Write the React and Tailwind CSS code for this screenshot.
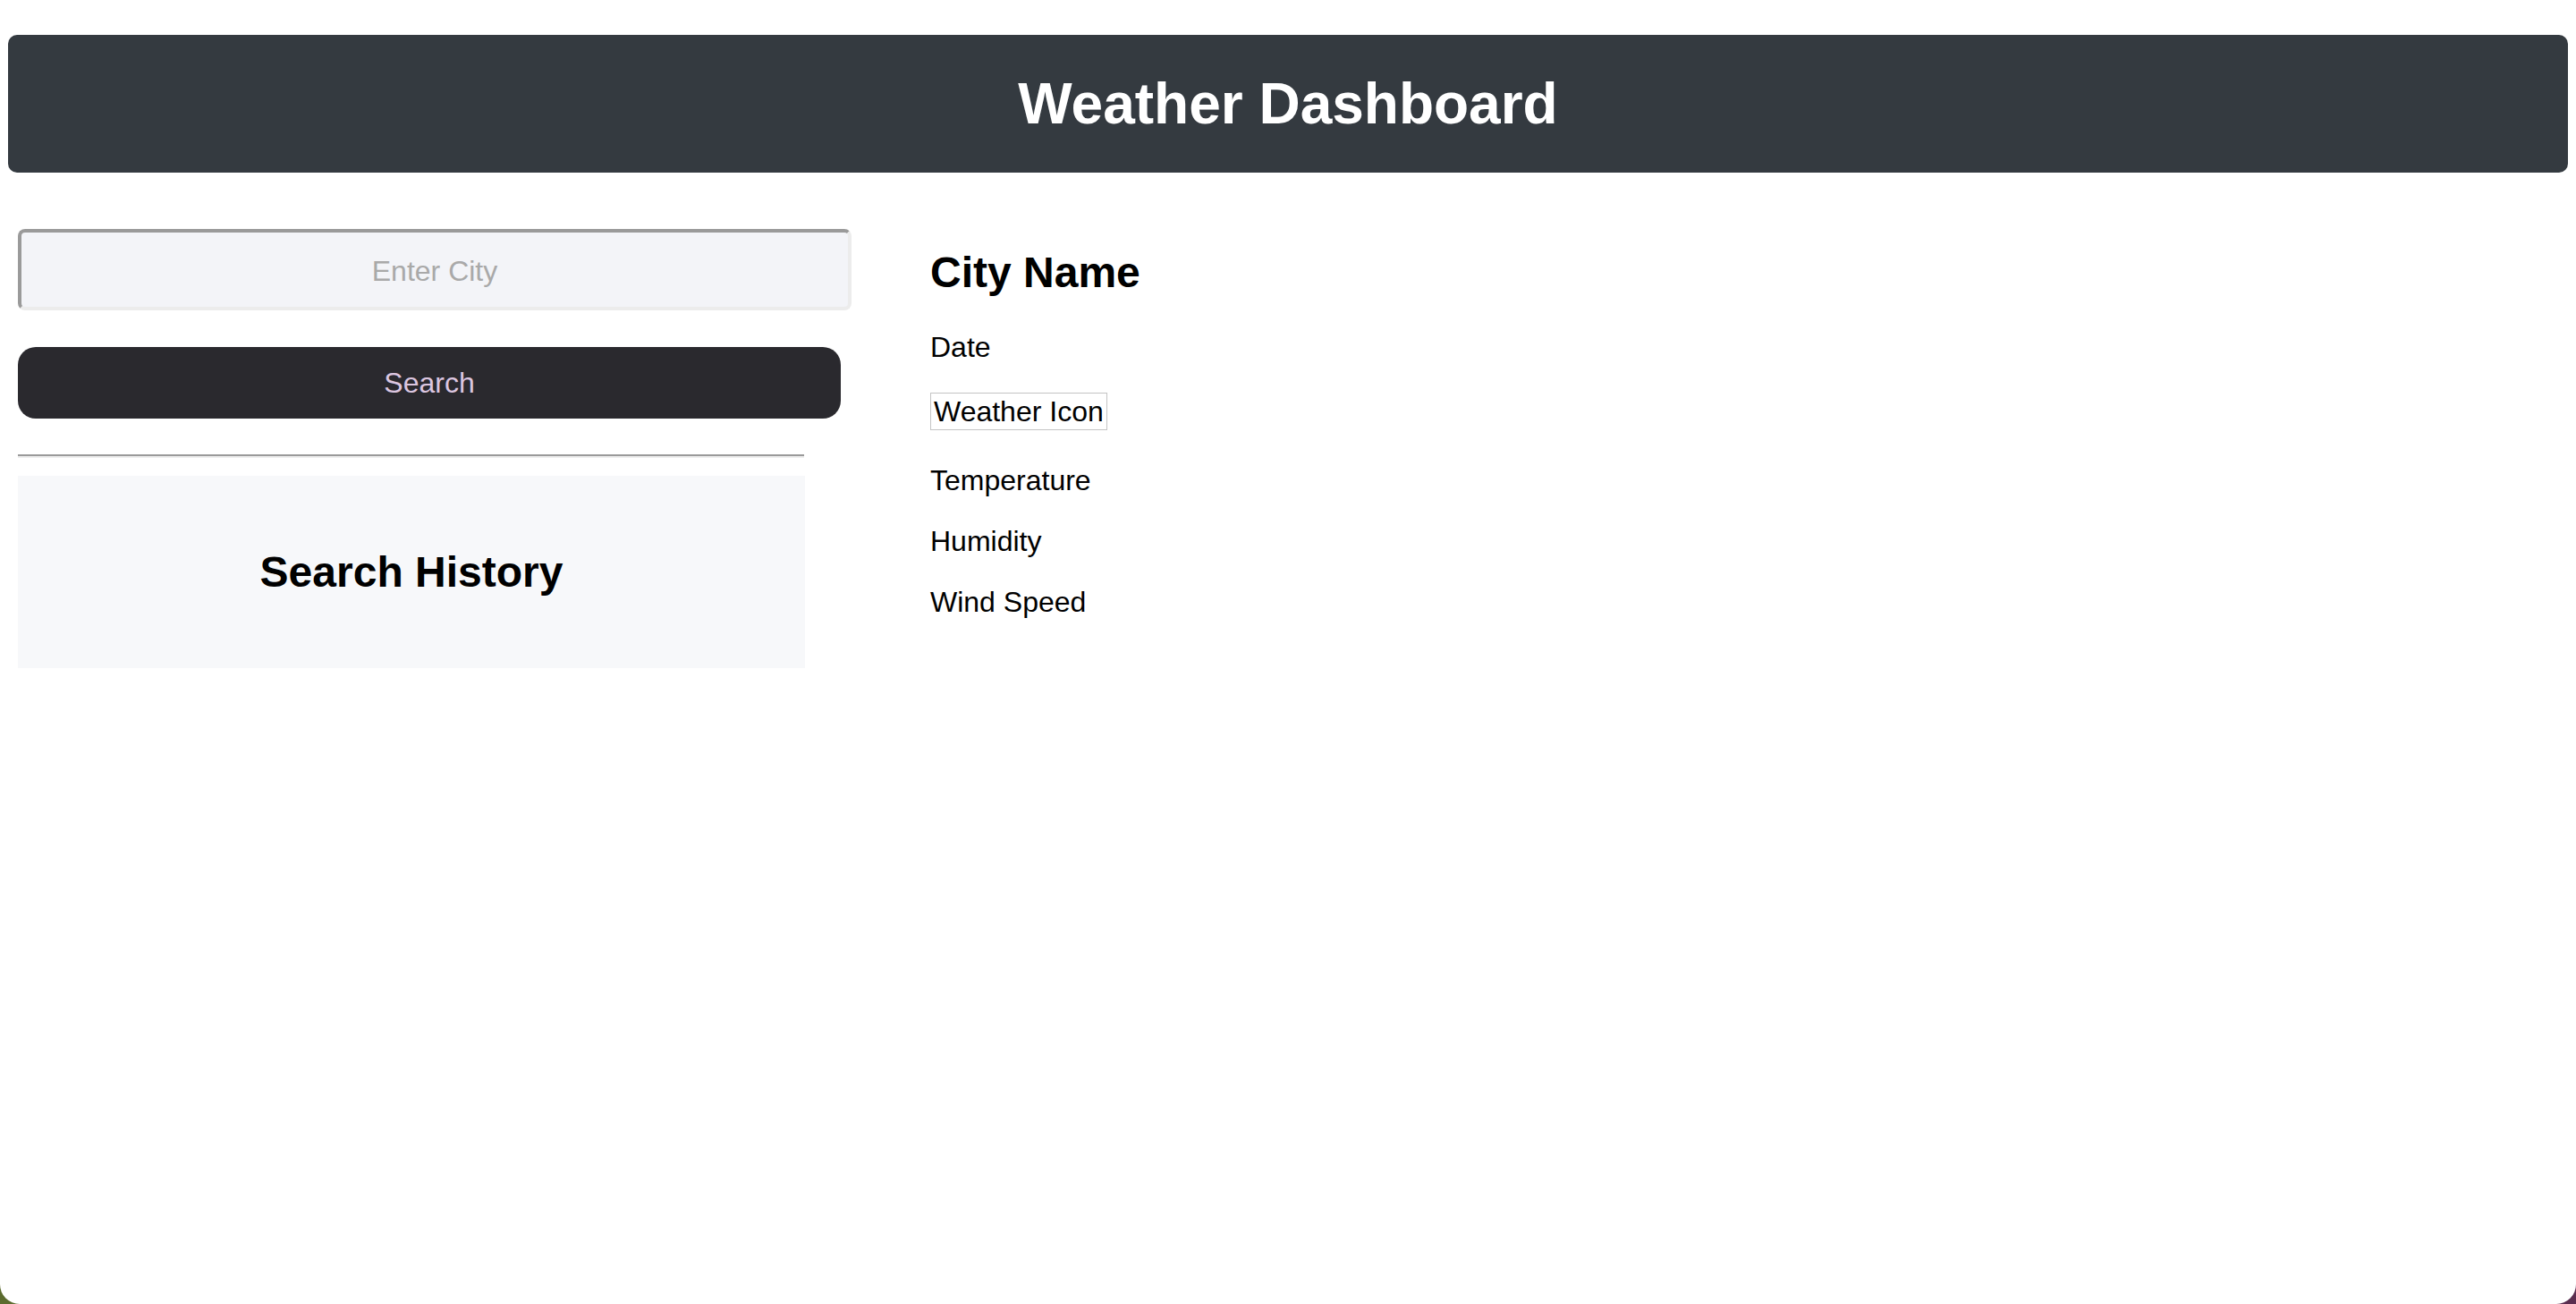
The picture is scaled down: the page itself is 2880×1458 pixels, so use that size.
import React, { useState } from 'react';

// Placeholder weather fields shown before any city is searched
const weatherFields = ['Temperature', 'Humidity', 'Wind Speed'];

function App() {
  const [city, setCity] = useState('');

  return (
    <div className="min-h-screen bg-gradient-to-r from-[#5b6b2e] to-[#5a2d4f]">
      <div className="h-[1458px] bg-white rounded-b-[22px] font-['Liberation_Sans',Arial,sans-serif] text-black overflow-hidden">
        {/* header */}
        <header className="mx-[9px] mt-[39px] h-[154px] rounded-[10px] bg-[#343a40] flex items-center justify-center">
          <h1 className="text-[64px] font-bold text-white leading-[74px]">Weather Dashboard</h1>
        </header>

        <main className="flex mt-[63px]">
          {/* left column: search */}
          <div className="ml-[20px] w-[932px] flex flex-col">
            <input
              type="text"
              value={city}
              onChange={(e) => setCity(e.target.value)}
              placeholder="Enter City"
              className="w-[932px] h-[91px] pt-[3px] border-4 border-t-[#9a9a9a] border-l-[#9a9a9a] border-b-[#ececec] border-r-[#ececec] rounded-[8px] bg-[#f3f4f8] text-center text-[32px] outline-none placeholder:text-[#a9a9a9]"
            />
            <button className="mt-[41px] w-[920px] h-[80px] rounded-[20px] bg-[#2a292e] text-[#dcc6e0] text-[32px]">
              Search
            </button>
            <div className="mt-[40px] w-[879px]">
              <div className="h-[2px] bg-[#9a9a9a]" />
              <div className="h-[2px] bg-[#eeeeee]" />
            </div>
            <div className="mt-[20px] w-[880px] h-[215px] bg-[#f7f8fa] flex items-center justify-center">
              <h2 className="text-[48px] font-bold leading-[56px]">Search History</h2>
            </div>
          </div>

          {/* right column: current weather */}
          <div className="ml-[88px] mt-[21px] flex flex-col items-start">
            <h2 className="text-[48px] font-bold leading-[56px]">City Name</h2>
            <p className="mt-[37px] text-[32px] leading-[37px]">Date</p>
            <div className="mt-[32px] border border-[#c4c4c4] px-[3px] pt-[2px] pb-[1px] text-[32px] leading-[37px]">
              Weather Icon
            </div>
            {weatherFields.map((field, i) => (
              <p key={field} className={i === 0 ? 'mt-[38px] text-[32px] leading-[37px]' : 'mt-[31px] text-[32px] leading-[37px]'}>
                {field}
              </p>
            ))}
          </div>
        </main>
      </div>
    </div>
  );
}

export default App;
